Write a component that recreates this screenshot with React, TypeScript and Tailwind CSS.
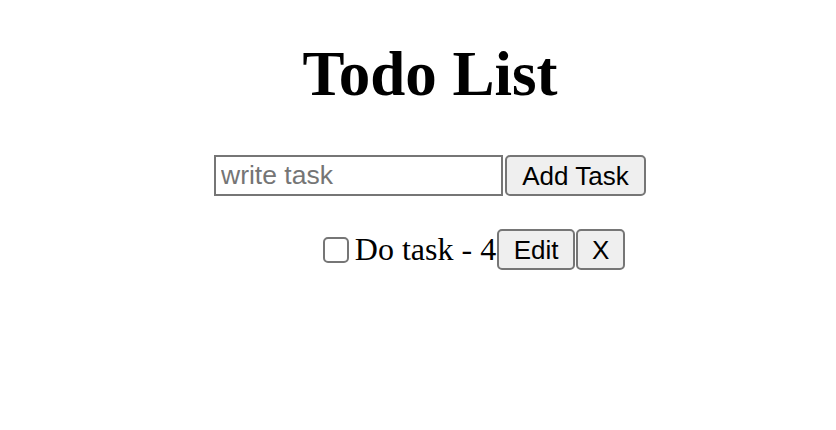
import React from "react";

export default function App() {
  return (
    <div className="min-h-[430px] w-full bg-white flex flex-col items-center pl-[24px] text-black" style={{ fontFamily: '"Liberation Serif", "Times New Roman", serif' }}>
      <h1 className="mt-[38px] text-[63px] font-bold leading-[72px]">Todo List</h1>
      <div className="mt-[45px] flex items-center">
        <input
          type="text"
          placeholder="write task"
          className="w-[289px] h-[41px] border-2 border-[#767676] bg-white px-[5px] text-[26.5px] text-black placeholder:text-[#757575] outline-none"
          style={{ fontFamily: '"Liberation Sans", Arial, sans-serif' }}
        />
        <button
          className="ml-[2px] w-[141px] h-[41px] border-2 border-[#767676] rounded-[5px] bg-[#efefef] text-[26px] leading-none text-black"
          style={{ fontFamily: '"Liberation Sans", Arial, sans-serif' }}
        >
          Add Task
        </button>
      </div>
      <ul className="mt-[33px] pl-[80px] list-none">
        <li className="flex items-center">
          <input
            type="checkbox"
            className="appearance-none ml-[8px] mr-[6px] w-[26px] h-[26px] border-2 border-[#767676] rounded-[5px] bg-white"
          />
          <span className="text-[32px] leading-[41px]">Do task - 4</span>
          <button
            className="ml-[1px] w-[78px] h-[41px] border-2 border-[#767676] rounded-[5px] bg-[#efefef] text-[26px] leading-none text-black"
            style={{ fontFamily: '"Liberation Sans", Arial, sans-serif' }}
          >
            Edit
          </button>
          <button
            className="ml-[1px] w-[49px] h-[41px] border-2 border-[#767676] rounded-[5px] bg-[#efefef] text-[26px] leading-none text-black"
            style={{ fontFamily: '"Liberation Sans", Arial, sans-serif' }}
          >
            X
          </button>
        </li>
      </ul>
    </div>
  );
}
